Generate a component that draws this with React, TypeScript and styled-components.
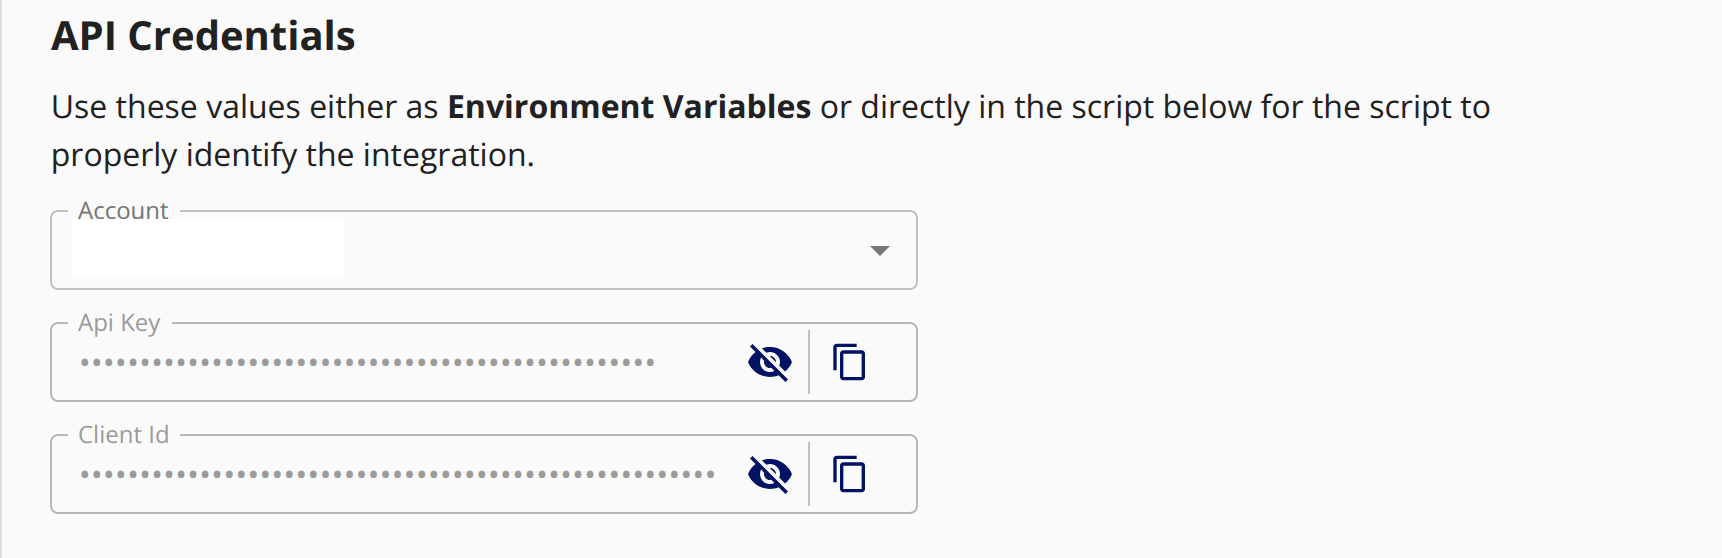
import React from 'react';
import styled, { createGlobalStyle } from 'styled-components';
import { MdArrowDropDown, MdContentCopy, MdVisibilityOff } from 'react-icons/md';

const GlobalStyle = createGlobalStyle`
  *, *::before, *::after { box-sizing: border-box; }
  body {
    margin: 0;
    background: #fafafa;
    color: #212121;
    font-family: 'Open Sans', 'Noto Sans', sans-serif;
    text-rendering: geometricPrecision;
    -webkit-font-smoothing: antialiased;
  }
`;

const Panel = styled.main`
  height: 558px;
  padding: 8px 48px 0;
  border-left: 2px solid #dcdcdc;
  overflow: hidden;
`;

const Title = styled.h1`
  margin: 0;
  padding-left: 1px;
  font-size: 40px;
  line-height: 54px;
  font-weight: 700;
`;

const Description = styled.p`
  width: 1500px;
  margin: 21px 0 0;
  padding-left: 0.75px;
  font-size: 32px;
  line-height: 48px;
`;

const Fields = styled.div`
  display: flex;
  flex-direction: column;
  gap: 32px;
  width: 868px;
  margin-top: 31px;
`;

const Field = styled.fieldset<{ $disabled?: boolean }>`
  display: block;
  min-width: 0;
  height: 80px;
  margin: 0;
  padding: 0;
  border: 2px solid ${(p) => (p.$disabled ? '#b8b8b8' : '#c0c0c0')};
  border-radius: 8px;
  color: ${(p) => (p.$disabled ? '#9b9b9b' : '#757575')};
`;

const Label = styled.legend<{ $width: number }>`
  width: ${(p) => p.$width}px;
  height: 2px;
  margin-left: 16px;
  padding: 0 0 0 10px;
  font-size: 24px;
  line-height: 2px;
  white-space: nowrap;
`;

const Row = styled.div`
  display: flex;
  align-items: center;
  height: 76px;
`;

const AccountValue = styled.div`
  position: relative;
  width: 272px;
  height: 60px;
  margin: 0 0 2px 20px;
  background: #fff;
`;

const ArrowIcon = styled(MdArrowDropDown)`
  width: 48px;
  height: 48px;
  margin: 0 12px 0 auto;
  color: #757575;
`;

const Secret = styled.span`
  flex: 1;
  padding: 2px 0 0 26.75px;
  font-size: 32px;
  line-height: 44px;
  white-space: nowrap;
`;

const IconButton = styled.button<{ $size: number }>`
  display: flex;
  padding: 0;
  border: 0;
  background: none;
  color: #001362;

  svg {
    width: ${(p) => p.$size}px;
    height: ${(p) => p.$size}px;
  }
`;

const Divider = styled.span`
  width: 2px;
  height: 64px;
  margin: 0 20px 0 14px;
  background: #c0c0c0;
`;

const Actions = styled.div`
  display: flex;
  align-items: center;
  margin-right: 46px;
`;

function SecretField({ label, labelWidth, length }: { label: string; labelWidth: number; length: number }) {
  return (
    <Field $disabled>
      <Label $width={labelWidth}>{label}</Label>
      <Row>
        <Secret>{'•'.repeat(length)}</Secret>
        <Actions>
          <IconButton $size={48} aria-label="Show value"><MdVisibilityOff /></IconButton>
          <Divider />
          <IconButton $size={40} aria-label="Copy value"><MdContentCopy /></IconButton>
        </Actions>
      </Row>
    </Field>
  );
}

export default function App() {
  return (
    <>
      <GlobalStyle />
      <Panel>
        <Title>API Credentials</Title>
        <Description>
          Use these values either as <strong>Environment Variables</strong> or directly in the script below for the
          script to properly identify the integration.
        </Description>
        <Fields>
          <Field>
            <Label $width={112}>Account</Label>
            <Row>
              <AccountValue />
              <ArrowIcon />
            </Row>
          </Field>
          <SecretField label="Api Key" labelWidth={104} length={48} />
          <SecretField label="Client Id" labelWidth={112} length={53} />
        </Fields>
      </Panel>
    </>
  );
}
